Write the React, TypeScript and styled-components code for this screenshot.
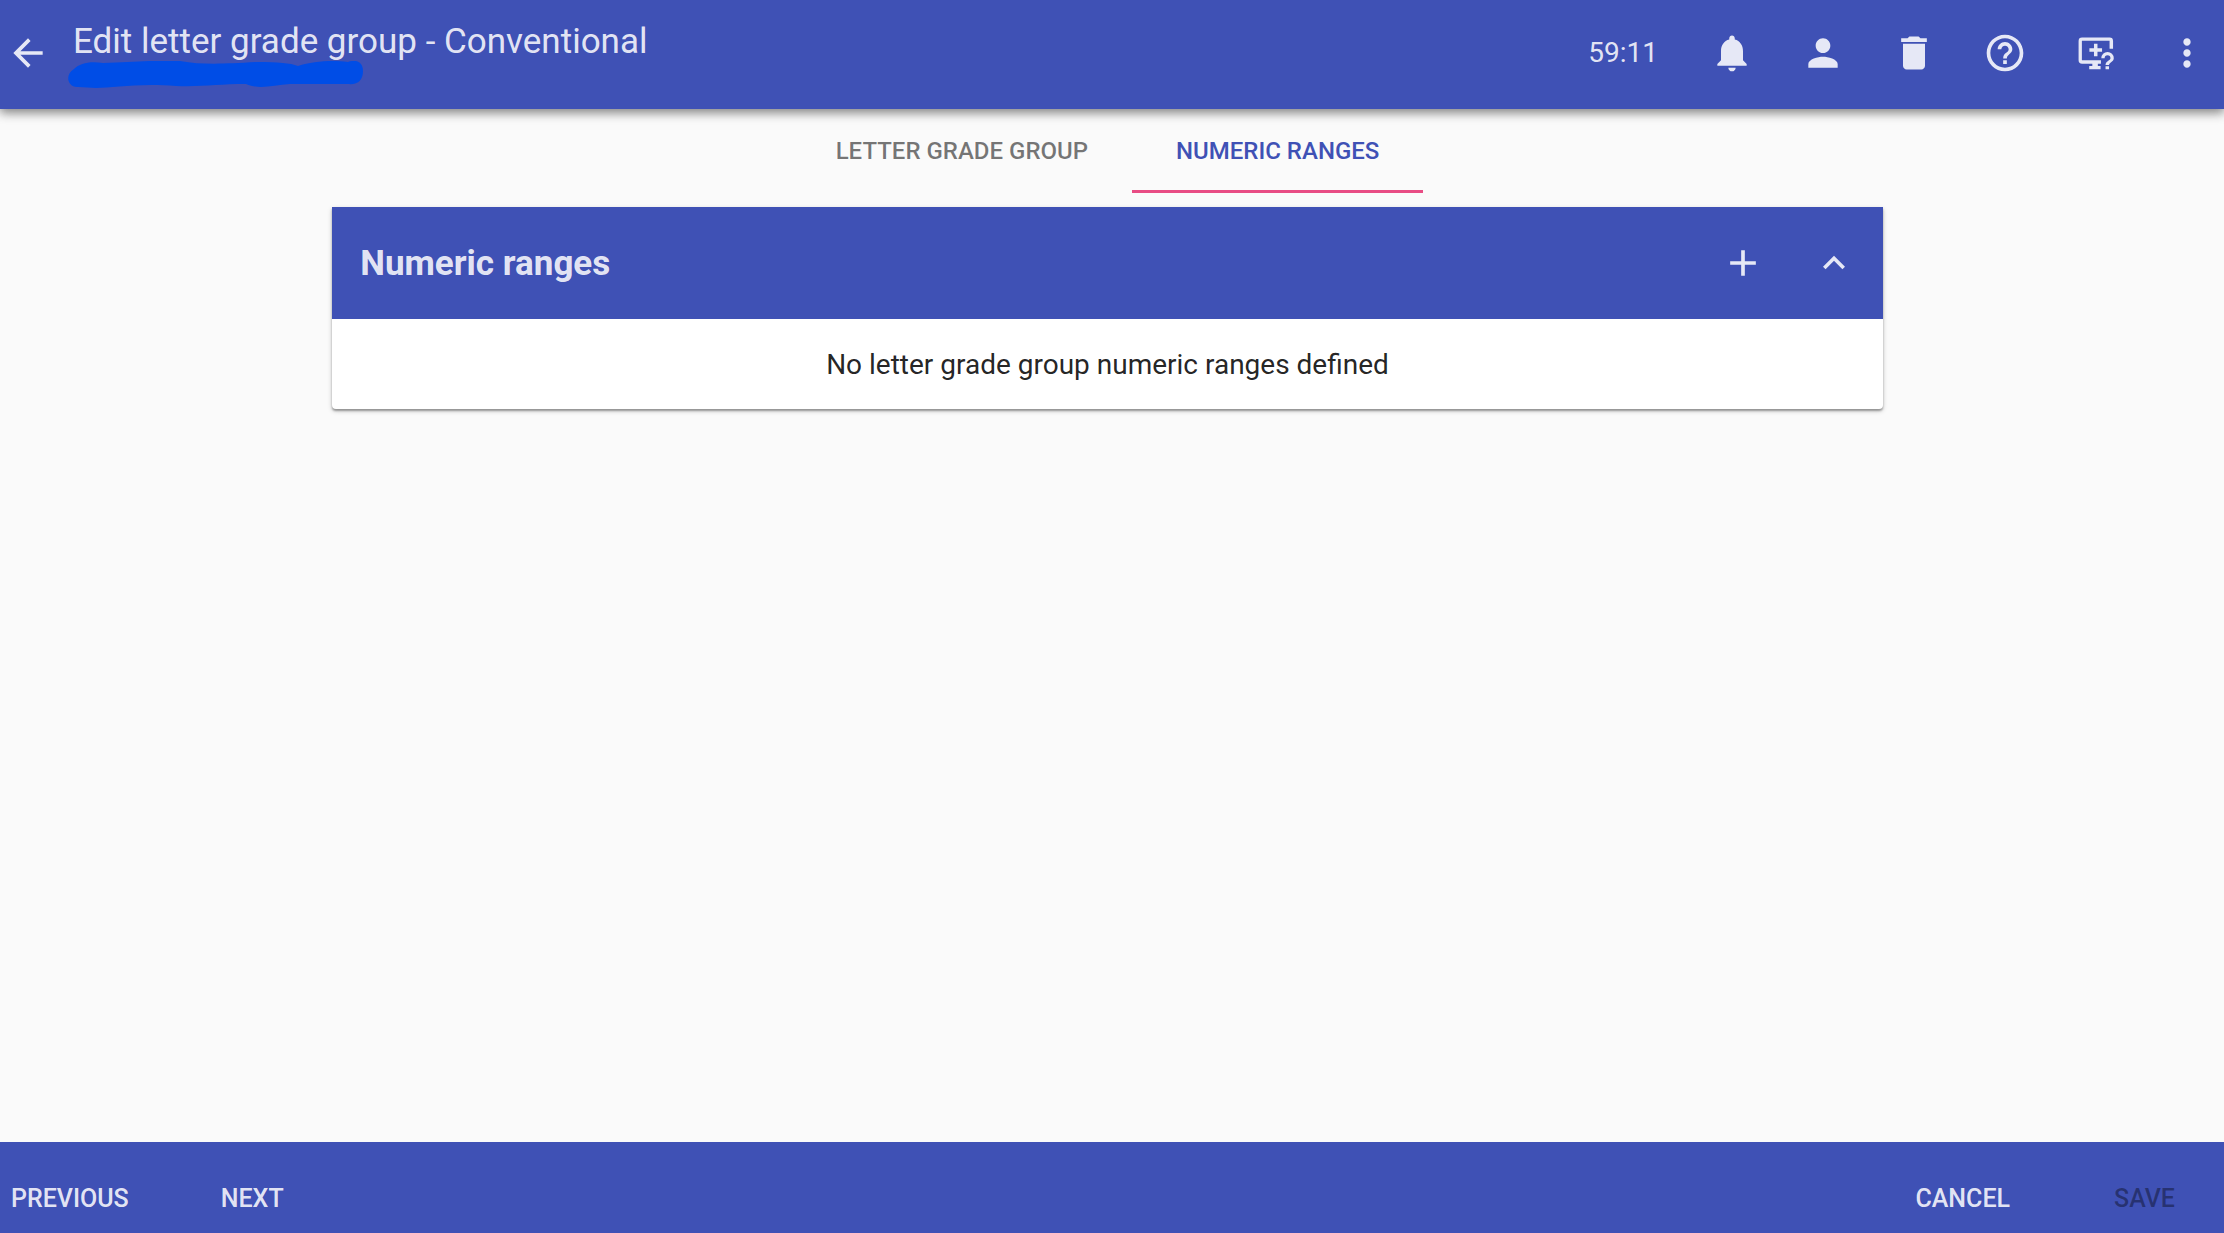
import React from "react";
import styled, { createGlobalStyle } from "styled-components";

const GlobalStyle = createGlobalStyle`
  *, *::before, *::after { box-sizing: border-box; }
  body {
    margin: 0;
    background: #fafafa;
    color: rgba(0, 0, 0, 0.87);
    font-family: Roboto, "Liberation Sans", sans-serif;
    font-size: 28px;
  }
  h1, h2, p { margin: 0; }
  button { border: 0; background: none; color: inherit; font: inherit; cursor: pointer; }
`;

const Page = styled.div`
  display: flex;
  flex-direction: column;
  min-height: 100vh;
`;

const Toolbar = styled.header`
  display: flex;
  align-items: center;
  height: 109px;
  padding-bottom: 3px;
  background: #3f51b5;
  color: rgba(255, 255, 255, 0.87);
  box-shadow: 0 4px 9px rgba(0, 0, 0, 0.28), 0 2px 12px rgba(0, 0, 0, 0.3);
`;

const IconButton = styled.button<{ $narrow?: boolean }>`
  display: flex;
  align-items: center;
  justify-content: center;
  flex: none;
  width: ${(p) => (p.$narrow ? 56 : 74)}px;
  height: 74px;
  padding: 0;
`;

const Icon = styled.svg`
  display: block;
  width: 44px;
  height: 44px;
  fill: currentColor;
`;

const Heading = styled.div`
  display: flex;
  flex-direction: column;
  flex: 1;
  padding-left: 12px;
`;

const Title = styled.h1`
  padding-left: 5px;
  font-size: 35px;
  font-weight: 400;
  line-height: 50px;
`;

const Scribble = styled.svg`
  display: block;
  width: 300px;
  height: 28px;
  margin-top: -6px;
  fill: #004de6;
`;

const Timer = styled.span`
  padding-right: 37px;
  line-height: 36px;
`;

const Actions = styled.div`
  display: flex;
  align-items: center;
  gap: 17px;
`;

const Main = styled.main`
  display: flex;
  flex-direction: column;
  align-items: center;
  flex: 1;
  padding-right: 9px;
`;

const Tabs = styled.div`
  display: flex;
`;

const Tab = styled.button<{ $active?: boolean }>`
  height: 84px;
  padding: 2px 44px 0;
  border-bottom: 3px solid ${(p) => (p.$active ? "#e84c84" : "transparent")};
  color: ${(p) => (p.$active ? "#3f51b5" : "rgba(0, 0, 0, 0.54)")};
  font-size: 24px;
  font-weight: 500;
  text-transform: uppercase;
`;

const Card = styled.section`
  width: 70%;
  margin-top: 14px;
  border-radius: 0 0 4px 4px;
  background: #fff;
  box-shadow: 0 2px 5px rgba(0, 0, 0, 0.2), 0 2px 2px rgba(0, 0, 0, 0.3);
`;

const CardHeader = styled.div`
  display: flex;
  align-items: center;
  height: 112px;
  padding: 0 12px 0 28px;
  background: #3f51b5;
  color: rgba(255, 255, 255, 0.87);
`;

const CardTitle = styled.h2`
  flex: 1;
  font-size: 35px;
  font-weight: 700;
`;

const Empty = styled.p`
  padding: 29px 28px 27px;
  line-height: 34px;
  text-align: center;
`;

const Footer = styled.footer`
  display: flex;
  align-items: flex-end;
  justify-content: space-between;
  height: 91px;
  padding-right: 38px;
  background: #3f51b5;
  color: rgba(255, 255, 255, 0.87);
`;

const FooterGroup = styled.div<{ $gap: number }>`
  display: flex;
  gap: ${(p) => p.$gap}px;
`;

const TextButton = styled.button`
  height: 70px;
  padding: 0 11px;
  font-size: 25px;
  font-weight: 500;
  text-transform: uppercase;

  &:disabled { color: rgba(0, 0, 0, 0.38); cursor: default; }
`;

const paths = {
  back: "M20 11H7.83l5.59-5.59L12 4l-8 8 8 8 1.41-1.41L7.83 13H20v-2z",
  bell: "M12 22c1.1 0 2-.9 2-2h-4c0 1.1.89 2 2 2zm6-6v-5c0-3.07-1.64-5.64-4.5-6.32V4c0-.83-.67-1.5-1.5-1.5s-1.5.67-1.5 1.5v.68C7.63 5.36 6 7.92 6 11v5l-2 2v1h16v-1l-2-2z",
  person: "M12 12c2.21 0 4-1.79 4-4s-1.79-4-4-4-4 1.79-4 4 1.79 4 4 4zm0 2c-2.67 0-8 1.34-8 4v2h16v-2c0-2.66-5.33-4-8-4z",
  trash: "M6 19c0 1.1.9 2 2 2h8c1.1 0 2-.9 2-2V7H6v12zM19 4h-3.5l-1-1h-5l-1 1H5v2h14V4z",
  help: "M11 18h2v-2h-2v2zm1-16C6.48 2 2 6.48 2 12s4.48 10 10 10 10-4.48 10-10S17.52 2 12 2zm0 18c-4.41 0-8-3.59-8-8s3.59-8 8-8 8 3.59 8 8-3.59 8-8 8zm0-14c-2.21 0-4 1.79-4 4h2c0-1.1.9-2 2-2s2 .9 2 2c0 2-3 1.75-3 5h2c0-2.25 3-2.5 3-5 0-2.21-1.79-4-4-4z",
  more: "M12 8c1.1 0 2-.9 2-2s-.9-2-2-2-2 .9-2 2 .9 2 2 2zm0 2c-1.1 0-2 .9-2 2s.9 2 2 2 2-.9 2-2-.9-2-2-2zm0 6c-1.1 0-2 .9-2 2s.9 2 2 2 2-.9 2-2-.9-2-2-2z",
  add: "M19 13h-6v6h-2v-6H5v-2h6V5h2v6h6v2z",
  collapse: "M12 8l-6 6 1.41 1.41L12 10.83l4.59 4.58L18 14z",
};

function Glyph({ name }: { name: keyof typeof paths }) {
  return (
    <Icon viewBox="0 0 24 24" aria-hidden="true">
      <path d={paths[name]} />
    </Icon>
  );
}

function RemoteSupportGlyph() {
  return (
    <Icon viewBox="0 0 24 24" aria-hidden="true">
      <path d="M4.400 3.500H19.400a1.900 1.900 0 0 1 1.900 1.900V9.700h-1.900V5.300H4.300v10.600h10.400v1.900h-1.700v1.300h1.500v1.700H8.300v-1.700H10v-1.300H4.400a1.900 1.900 0 0 1-1.900-1.900V5.400A1.900 1.900 0 0 1 4.400 3.500z" />
      <path d="M10.900 6.900h1.900v2.500h2.500v1.900h-2.500v2.500h-1.900v-2.500H8.400V9.400h2.500z" />
      <path d="M17.200 19.200h1.900v1.700h-1.900zM14.900 14.800a3.400 3.400 0 0 1 6.800 0c0 2-2.600 2.200-2.600 3.800h-1.900c0-2.500 2.700-2.400 2.700-3.800a1.600 1.600 0 0 0-3.200 0z" />
    </Icon>
  );
}

export default function App() {
  return (
    <Page>
      <GlobalStyle />
      <Toolbar>
        <IconButton $narrow aria-label="Back"><Glyph name="back" /></IconButton>
        <Heading>
          <Title>Edit letter grade group - Conventional</Title>
          <Scribble viewBox="0 0 300 28" aria-hidden="true">
            <path d="M6 8C12 2 22 0 35 2C65 1 85-1 112 0C135 4 154 3 190 1C210 1 222 2 230 5C245 0 265-1 280 1C288-2 295 1 295 10C295 19 290 24 280 23L222 23C205 24 192 29 178 23C150 23 135 26 108 25C70 22 45 27 28 27L10 26C0 27-4 14 6 8Z" />
          </Scribble>
        </Heading>
        <Timer>59:11</Timer>
        <Actions>
          <IconButton aria-label="Notifications"><Glyph name="bell" /></IconButton>
          <IconButton aria-label="Account"><Glyph name="person" /></IconButton>
          <IconButton aria-label="Delete"><Glyph name="trash" /></IconButton>
          <IconButton aria-label="Help"><Glyph name="help" /></IconButton>
          <IconButton aria-label="Remote support"><RemoteSupportGlyph /></IconButton>
          <IconButton aria-label="More"><Glyph name="more" /></IconButton>
        </Actions>
      </Toolbar>
      <Main>
        <Tabs role="tablist">
          <Tab role="tab" aria-selected={false}>Letter grade group</Tab>
          <Tab role="tab" aria-selected $active>Numeric ranges</Tab>
        </Tabs>
        <Card>
          <CardHeader>
            <CardTitle>Numeric ranges</CardTitle>
            <Actions>
              <IconButton aria-label="Add range"><Glyph name="add" /></IconButton>
              <IconButton aria-label="Collapse"><Glyph name="collapse" /></IconButton>
            </Actions>
          </CardHeader>
          <Empty>No letter grade group numeric ranges defined</Empty>
        </Card>
      </Main>
      <Footer>
        <FooterGroup $gap={70}>
          <TextButton>Previous</TextButton>
          <TextButton>Next</TextButton>
        </FooterGroup>
        <FooterGroup $gap={82}>
          <TextButton>Cancel</TextButton>
          <TextButton disabled>Save</TextButton>
        </FooterGroup>
      </Footer>
    </Page>
  );
}
